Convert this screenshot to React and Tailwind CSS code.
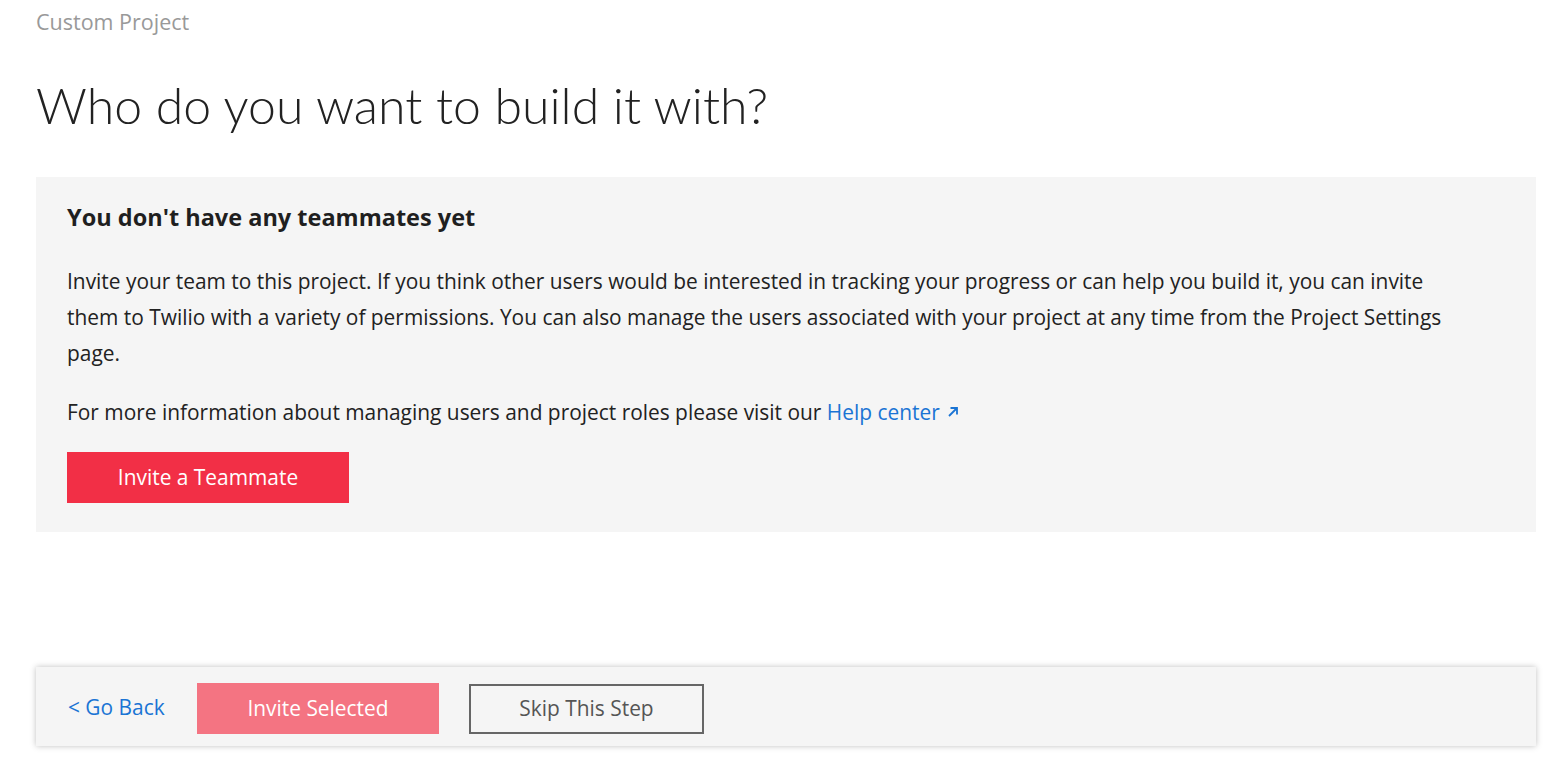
export default function App() {
  return (
    <div
      className="min-h-screen bg-white pl-9 pr-[31px] pt-[6px] text-[#1f1f1f]"
      style={{ fontFamily: '"Open Sans", Lato, sans-serif' }}
    >
      <div className="text-[21.5px] leading-[32px] text-[#999999]">Custom Project</div>
      <h1
        className="mt-[37px] text-[50px] leading-[60px] font-light text-[#222222]"
        style={{ fontFamily: 'Lato, "Open Sans", sans-serif' }}
      >
        Who do you want to build it with?
      </h1>

      <div className="mt-[42px] bg-[#f5f5f5] px-[31px] pt-[24px] pb-[29px]">
        <h2 className="text-[23.5px] leading-[32px] font-bold text-[#1f1f1f]">
          You don't have any teammates yet
        </h2>
        <p className="mt-[30px] text-[20.9px] leading-[36px] text-[#222222]">
          Invite your team to this project. If you think other users would be interested in tracking your progress or can help you build it, you can invite
          <br />
          them to Twilio with a variety of permissions. You can also manage the users associated with your project at any time from the Project Settings
          <br />
          page.
        </p>
        <p className="mt-[23px] text-[20.9px] leading-[36px] text-[#222222]">
          For more information about managing users and project roles please visit our{' '}
          <a href="#" className="inline-flex items-center gap-[7px] text-[#1a74d4]">
            Help center
            <svg width="12" height="12" viewBox="0 0 12 12" fill="none" stroke="currentColor" strokeWidth="1.8">
              <path d="M2 10 L10 2 M3.5 2 H10 V8.5" />
            </svg>
          </a>
        </p>
        <button className="mt-[22px] flex h-[51px] w-[282px] items-center justify-center bg-[#f22f46] text-[20.9px] text-white">
          Invite a Teammate
        </button>
      </div>

      <div className="mt-[135px] flex h-[79px] items-center bg-[#f5f5f5] pt-[4px] pl-[32px] shadow-[0_0_6px_rgba(0,0,0,0.25)]">
        <a href="#" className="w-[129px] pb-[2px] text-[20.9px] text-[#1a74d4]">&lt; Go Back</a>
        <button className="flex h-[51px] w-[242px] items-center justify-center bg-[#f47482] text-[20.9px] text-white">
          Invite Selected
        </button>
        <button className="ml-[30px] flex h-[50px] w-[235px] items-center justify-center border-2 border-[#666666] text-[20.9px] text-[#555555]">
          Skip This Step
        </button>
      </div>
    </div>
  );
}
